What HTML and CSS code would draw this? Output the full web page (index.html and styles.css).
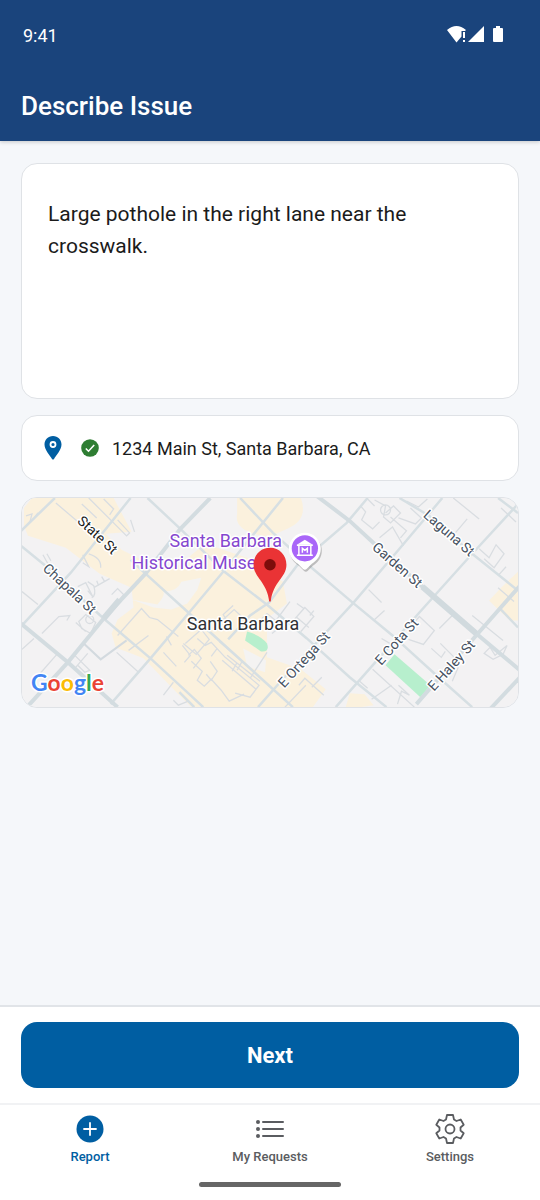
FILE: index.html
```html
<!DOCTYPE html>
<html lang="en">
<head>
<meta charset="utf-8">
<meta name="viewport" content="width=device-width, initial-scale=1">
<title>Describe Issue</title>
<link rel="stylesheet" href="styles.css">
</head>
<body>

<header class="top">
    <div class="status">
        <span>9:41</span>
        <svg class="status-icons" width="60" height="20" viewBox="0 0 60 20" fill="#fff" aria-hidden="true">
            <path d="M0 5 Q9.500 -3 19 5 L18 6 H14.500 V11.500 L9.500 17.500Z"/>
            <path d="M16 7h2v6h-2zM16 15h2v2h-2z"/>
            <path d="M21 17 L37 1 V17Z"/>
            <path d="M49 1h4v2h2q1 0 1 1v12q0 1-1 1h-8q-1 0-1-1V4q0-1 1-1h2z"/>
        </svg>
    </div>
    <h1>Describe Issue</h1>
</header>

<main>
    <textarea class="card description" aria-label="Issue description">Large pothole in the right lane near the crosswalk.</textarea>

    <div class="card address">
        <svg class="pin" width="18" height="24" viewBox="0 0 18 24" aria-hidden="true">
            <path d="M9 0C4 0 .5 3.700 .5 8.500C.5 14 6 19.500 8 23Q9 24 10 23C12 19.500 17.500 14 17.500 8.500C17.500 3.700 14 0 9 0Z" fill="#005ea2"/>
            <circle cx="9" cy="8.500" r="2.500" fill="#005ea2" stroke="#fff" stroke-width="1.800"/>
        </svg>
        <svg class="check" width="18" height="18" viewBox="0 0 18 18" aria-hidden="true">
            <circle cx="9" cy="9" r="8.800" fill="#2e7d32"/>
            <path d="M4.800 9.500 L7.500 12.200 L13.200 6" fill="none" stroke="#fff" stroke-width="1.600"/>
        </svg>
        <span>1234 Main St, Santa Barbara, CA</span>
    </div>

    <svg class="map" viewBox="0 0 498 210" role="img" aria-label="Map of Santa Barbara">
        <rect width="498" height="210" fill="#f3f2f3"/>

        <!-- commercial areas -->
        <g fill="#fbf1dd">
            <path d="M10 0H92L110 34L84 36L100 52L128 66L154 70L184 46L232 62L262 84L266 106L246 121L246 160L280 172L305 192L292 210H170L157 197L122 161L94 150L90 136L96 122L112 110L110 90L78 76L44 50L6 38L2 28V10Z"/>
            <path d="M216 0H280Q288 22 266 31L248 39Q212 34 216 16Z"/>
            <path d="M498 74L481 90L469 103L478 112L490 123H498ZM329 196L344 197L353 208L340 210H325Z"/>
        </g>
        <path d="M110 102L136 107Q144 98 142 94Q156 94 160 84L180 80L176 92L166 106L150 112L132 110Z" fill="#f4f3f2"/>
        <path d="M222 151L245 163L244 175L226 169Z" fill="#f4f3f2"/>

        <!-- parks -->
        <g fill="#b7efcd">
            <path d="M226 134Q240 138 246 146Q249 155 240 154L224 143Z"/>
            <path d="M365 168L374 157L410 188L400 200Z"/>
        </g>

        <!-- lanes, parking lots and footpaths -->
        <g fill="none" stroke="#d9dde1" stroke-width="1.300">
            <path d="M4 18L10 16L8 24M11 22L16 15M21 57L26 66M25 56L29 63M34 5L75 40M67 0L105 38L108 35L96 22M109 22L113 34M75 20L60 6M82 1L92 11L88 17"/>
            <path d="M61 57L67 69L61 65M67 56Q80 60 79 70M56 89L64 85L71 99L66 93M66 84L72 88Q75 98 70 100M72 90L88 81M77 88L75 83M83 84L80 79M90 97L96 91L102 97L96 104"/>
            <path d="M0 94L16 107M20 136L37 119L48 118L45 123M57 124L64 117L74 125L69 136L60 131ZM64 122a4 4 0 1 0 8 0a4 4 0 1 0-8 0M54 125L64 134M52 157L68 173L63 175L56 168M53 171L66 156M35 157L14 181M0 152L12 141"/>
            <path d="M96 138L120 111L128 120L136 122L157 139M107 153L127 138M95 155L117 175M142 155L155 169M145 139L150 148M142 198L152 185M152 203L157 208L167 204M161 148L169 158L163 165"/>
            <path d="M164 146L180 132L188 142L175 157L162 146M167 158L173 152L180 161L172 171M176 141L184 148L190 145L204 160L238 188L229 200L214 196M170 164L181 174L176 183L183 189L190 182L200 193L208 204L223 197M189 164L196 174L190 183L185 177M201 163L235 192M206 158L239 184M196 151L190 159M198 144L221 164L216 173M216 165L211 174M202 122L213 112L227 125M205 122L202 117L212 108M246 155L229 181"/>
            <path d="M255 123L269 104M269 127L284 110L293 119L280 134M276 120L288 130M283 111L276 106M289 118L293 113M251 136L261 128L246 116L236 126M278 188L284 181L303 198M291 190L301 180M264 210L285 188"/>
            <path d="M340 8L345 14L341 22L352 31L359 24M354 2L365 8L363 19L370 25L380 15L373 8L365 15M378 20L395 26L401 20L390 10M359 40L372 29L383 48M346 0L354 8M386 3L398 9L407 1M360 12a5 5 0 1 0 10 0a5 5 0 1 0-10 0M370 19L386 33L380 40"/>
            <path d="M433 0L459 21M430 41L447 21M459 51L469 60L476 47L484 56L474 70L464 61M478 78L486 69M481 10L496 24M478 90L494 104M419 131L432 118M348 92L361 105M354 122L364 113M392 127L399 119L414 133L403 147L388 142M452 118L483 143M411 151L421 160L425 154M420 146L434 160M464 156L470 150L475 158L487 148L483 157L473 162ZM361 141L371 147M377 207L381 194L389 198L378 188M351 202L371 188M432 184L438 170M477 154L498 170"/>
            <path d="M352 172L394 210M339 184L347 191"/>
        </g>

        <!-- streets -->
        <g fill="none" stroke="#d6dfe3" stroke-width="2.500">
            <path d="M-1 33L33 0"/>
            <path d="M-1 129L49 75L109 0"/>
            <path d="M89 207L129 161L167 116L202 74L262 0"/>
            <path d="M207 142L229 118L248 105L276 68L326 25L347 0"/>
            <path d="M237 210L259 185L332 106L379 51L422 0"/>
            <path d="M315 210L352 168L399 115L452 56L498 6"/>
            <path d="M-1 48L26 70L82 121L129 161L169 198L182 210"/>
            <path d="M109 62L124 76L167 115L272 210"/>
            <path d="M126 0L159 31L202 73L247 108L286 141L329 180L366 210"/>
            <path d="M219 0L252 35L292 71L332 105L372 138L416 178L452 210"/>
            <path d="M379 0L409 18L452 56L498 93"/>
            <path d="M478 0L498 15M479 110L498 130M158 195L173 210"/>
        </g>
        <g fill="none" stroke="#d3dce0" stroke-width="4">
            <path d="M5 210L46 165L82 121L124 76L159 31L189 0"/>
            <path d="M-1 126L46 165L96 210"/>
            <path d="M296 -2L329 23L356 48L412 98L456 136L500 173"/>
            <path d="M396 207L456 138L500 88"/>
            <path d="M470 212L500 180"/>
        </g>
        <path d="M82 121L98 102M402 89L456 136" fill="none" stroke="#d1dade" stroke-width="6"/>
        <path d="M62 146L79 162L105 143" fill="none" stroke="#d3dadf" stroke-width="2"/>

        <g class="street">
            <text class="main-street" transform="translate(76 37) rotate(43)" y="5">State St</text>
            <text transform="translate(48 91) rotate(43)" y="5">Chapala St</text>
            <text transform="translate(377 67) rotate(41)" y="5">Garden St</text>
            <text transform="translate(429 35) rotate(41)" y="5">Laguna St</text>
            <text transform="translate(283 162) rotate(-48)" y="5">E Ortega St</text>
            <text transform="translate(376 144) rotate(-48)" y="5">E Cota St</text>
            <text transform="translate(431 168) rotate(-48)" y="5">E Haley St</text>
        </g>

        <g class="museum">
            <text x="261" y="49">Santa Barbara</text>
            <text x="261" y="71">Historical Museum</text>
        </g>
        <text class="city" x="222" y="133">Santa Barbara</text>

        <!-- museum marker -->
        <path d="M284 35a16 16 0 0 1 16 16c0 7-4 12-9 15l-5 5q-2 2-4 0l-5-5c-5-3-9-8-9-15a16 16 0 0 1 16-16z" fill="#888" opacity=".5" transform="translate(1 2)"/>
        <path d="M284 35a16 16 0 0 1 16 16c0 7-4 12-9 15l-5 5q-2 2-4 0l-5-5c-5-3-9-8-9-15a16 16 0 0 1 16-16z" fill="#fff"/>
        <circle cx="284" cy="50.500" r="13.200" fill="#a966f8"/>
        <path d="M276 47L284 42L292 47Z" fill="#fff"/>
        <path d="M276 47.500H292M278 48V57M290 48V57M276 57.500H292M281.500 55V50.500L284 52.500L286.500 50.500V55" fill="none" stroke="#fff" stroke-width="1.500"/>

        <!-- issue marker -->
        <path d="M249 50C239.500 50 232.500 57.500 232.500 67C232.500 80 246 84 248.200 104H249.800C252 84 265.500 80 265.500 67C265.500 57.500 258.500 50 249 50Z" fill="#ea3335"/>
        <circle cx="249" cy="67" r="5.800" fill="#7d0d0b"/>

        <text class="google" x="9" y="194"><tspan fill="#4285f4">G</tspan><tspan fill="#ea4335">o</tspan><tspan fill="#fbbc04">o</tspan><tspan fill="#4285f4">g</tspan><tspan fill="#34a853">l</tspan><tspan fill="#ea4335">e</tspan></text>
    </svg>
</main>

<footer>
    <div class="actions">
        <button type="button" class="next">Next</button>
    </div>
    <nav>
        <a href="#report" class="active">
            <svg width="30" height="30" viewBox="0 0 30 30" aria-hidden="true">
                <circle cx="15" cy="15" r="13.500" fill="#005ea2"/>
                <path d="M15 9v12M9 15h12" stroke="#fff" stroke-width="1.800" stroke-linecap="round"/>
            </svg>
            Report
        </a>
        <a href="#requests">
            <svg width="30" height="30" viewBox="0 0 30 30" fill="currentColor" aria-hidden="true">
                <circle cx="3" cy="8" r="2"/><circle cx="3" cy="15" r="2"/><circle cx="3" cy="22" r="2"/>
                <path d="M8 8h20M8 15h20M8 22h20" stroke="currentColor" stroke-width="2" stroke-linecap="round"/>
            </svg>
            My Requests
        </a>
        <a href="#settings">
            <svg width="30" height="30" viewBox="0 0 30 30" fill="none" stroke="currentColor" stroke-width="1.800" stroke-linejoin="round" aria-hidden="true">
                <path d="M12 1H18L19 5.500L21.500 7L25.700 5.500L28.700 10.700L25.500 13.500V16.500L28.700 19.300L25.700 24.500L21.500 23L19 24.500L18 29H12L11 24.500L8.500 23L4.300 24.500L1.300 19.300L4.500 16.500V13.500L1.300 10.700L4.300 5.500L8.500 7L11 5.500Z"/>
                <circle cx="15" cy="15" r="4.500"/>
            </svg>
            Settings
        </a>
    </nav>
    <div class="home-bar"></div>
</footer>

</body>
</html>
```
FILE: styles.css
```css
* {
    box-sizing: border-box;
}

body {
    margin: 0;
    min-height: 100vh;
    display: flex;
    flex-direction: column;
    background: #f5f7fa;
    color: #1b1b1b;
    font-family: Roboto, "Liberation Sans", sans-serif;
}

.top {
    background: #1a447c;
    color: #fff;
    padding: 22px 21px 18px;
    box-shadow: 0 1px 4px rgba(0, 0, 0, 0.2);
}

.status {
    display: flex;
    justify-content: space-between;
    align-items: center;
    height: 26px;
    padding: 0 12px 0 2px;
    font-size: 18px;
}

h1 {
    margin: 42px 0 0;
    font-size: 26px;
    line-height: 33px;
    font-weight: 500;
}

main {
    flex: 1;
    display: flex;
    flex-direction: column;
    gap: 16px;
    padding: 22px 21px;
}

.card {
    background: #fff;
    border: 1px solid #dfe2e6;
    border-radius: 16px;
}

.description {
    display: block;
    width: 100%;
    height: 236px;
    padding: 34px 26px;
    color: inherit;
    font-family: inherit;
    font-size: 21px;
    line-height: 32px;
    resize: none;
}

.address {
    display: flex;
    align-items: center;
    min-height: 66px;
    padding: 0 22px;
    font-size: 18px;
}

.check {
    margin: 0 13px 0 19px;
}

.map {
    display: block;
    width: 100%;
    border: 1px solid #dfe2e6;
    border-radius: 16px;
}

.map text {
    text-anchor: middle;
    paint-order: stroke;
    stroke: #fff;
    stroke-width: 3px;
    stroke-linejoin: round;
}

.street {
    font-size: 14px;
    fill: #46515f;
}

.main-street {
    fill: #1b1b1b;
}

.map .museum text {
    font-size: 18px;
    fill: #8547cf;
    text-anchor: end;
}

.map .city {
    font-size: 18px;
    fill: #303134;
}

.map .google {
    font-family: Lato, sans-serif;
    font-size: 23px;
    font-weight: 700;
    text-anchor: start;
}

footer {
    background: #fff;
    border-top: 2px solid #e1e4e8;
}

.actions {
    padding: 15px 21px;
    border-bottom: 2px solid #f1f2f4;
}

.next {
    display: block;
    width: 100%;
    height: 66px;
    border: 0;
    border-radius: 16px;
    background: #005ea2;
    color: #fff;
    font-family: inherit;
    font-size: 22px;
    font-weight: 700;
}

nav {
    display: grid;
    grid-template-columns: repeat(3, 1fr);
    padding-top: 9px;
}

nav a {
    display: flex;
    flex-direction: column;
    align-items: center;
    gap: 5px;
    color: #5a5c60;
    font-size: 13px;
    line-height: 16px;
    font-weight: 500;
    text-decoration: none;
}

nav .active {
    color: #005ea2;
}

.home-bar {
    width: 142px;
    height: 5px;
    margin: 17px auto 13px;
    border-radius: 3px;
    background: #666;
}
```
